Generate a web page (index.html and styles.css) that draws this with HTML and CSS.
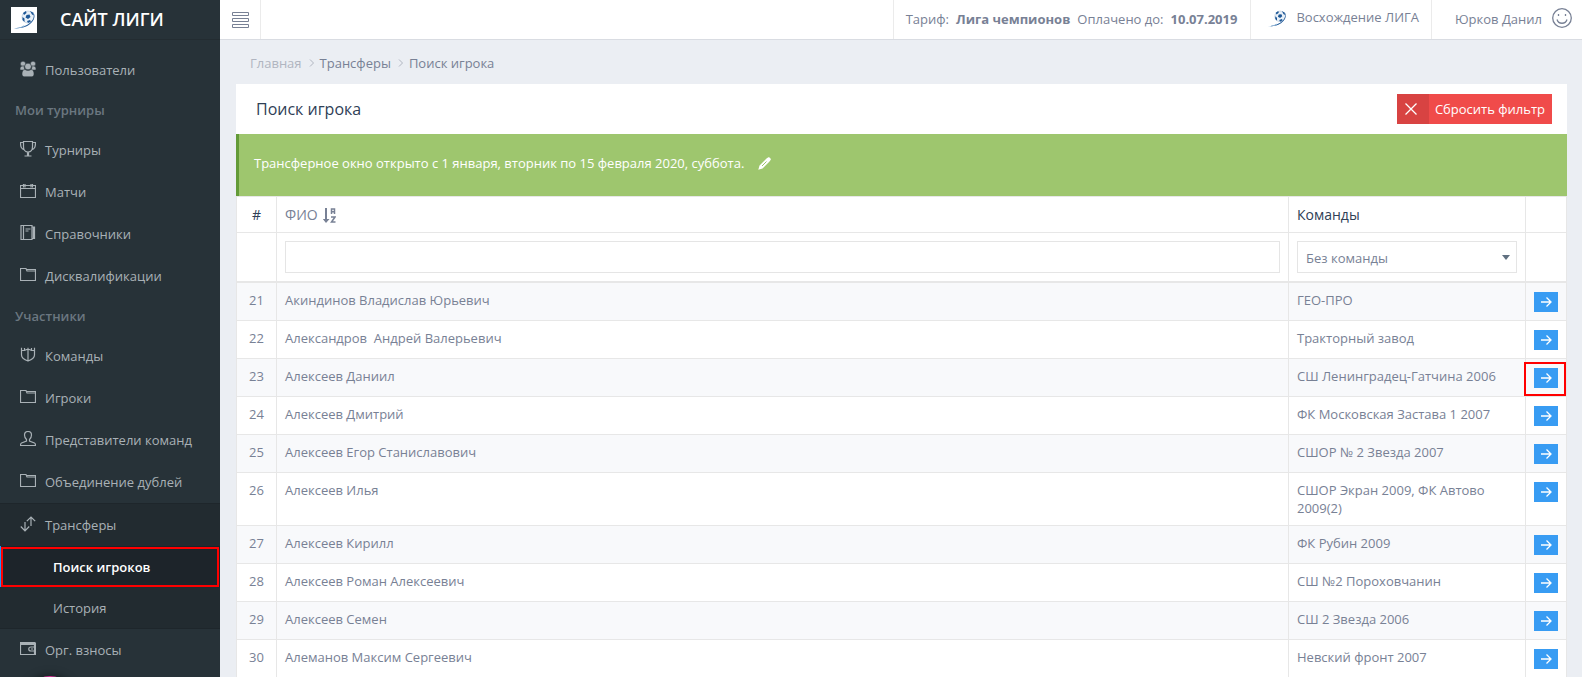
FILE: index.html
```html
<!DOCTYPE html>
<html lang="ru">
<head>
<meta charset="utf-8">
<title>Поиск игрока</title>
<link rel="stylesheet" href="styles.css">
</head>
<body>
<svg class="sprite" aria-hidden="true">
  <symbol id="folder" viewBox="0 0 16 16"><path d="M.5 1.500h5.500l1 2.500h8.500v9.500H.500zM6.500 2.500h9v2"/></symbol>
  <symbol id="arrow" viewBox="0 0 12 12"><path d="M1 6h9.500M6.500 1.500 11 6l-4.500 4.500"/></symbol>
  <symbol id="ball" viewBox="0 0 26 26">
    <circle cx="17" cy="10" r="6" fill="#e9f0f7" stroke="#a9bfd6" stroke-width=".6"/>
    <path fill="#1d5796" d="m15.500 8 3-.5 1 2.500-2.500 2-2.500-1.500zM12 6l3-2 .5 2-2.500 2zM19 4l3 1.500 1 3-2-1zM11.500 10l2 1.500v3.500l-2-2zM16 14l3-1 1 1.500-3 1.500z"/>
    <path fill="#1d5796" d="M21.500 4.500c4 5-1 12-8 14.500-4 1.500-7 2-10.500 2.500 4-.3 8-.5 12-2C21 17 26.500 9.500 21.500 4.500z"/>
    <path fill="#8ab2d6" d="M3 21.500c4-.5 7-1 9.500-3l1.500.5c-3 2-7 2.500-11 2.500z"/>
  </symbol>
</svg>
<div class="app">
  <aside class="sidebar">
    <div class="brand">
      <svg class="brand-logo"><use href="#ball"/></svg>
      <span class="brand-name">САЙТ ЛИГИ</span>
    </div>
    <nav class="menu">
      <a class="item" href="#"><svg class="icon solid" viewBox="0 0 16 16"><circle cx="3" cy="2.800" r="2.600"/><circle cx="13" cy="2.800" r="2.600"/><path d="M0 8c0-2 1-3 3-3h1c0 2 .5 3 1.500 4H1C.3 9 0 8.600 0 8zM16 8c0-2-1-3-3-3h-1c0 2-.5 3-1.500 4H15c.7 0 1-.4 1-1z"/><circle cx="8" cy="5.500" r="3.300"/><path d="M2 13c0-2.500 1-4.500 3-4.500 1.500 1.200 4.500 1.200 6 0 2 0 3 2 3 4.500 0 1.800-1 2.700-2.500 2.700h-7C3 15.700 2 14.800 2 13z"/></svg>Пользователи</a>
      <h2 class="caption">Мои турниры</h2>
      <a class="item" href="#"><svg class="icon" viewBox="0 0 16 16"><path d="M3.500.5h9v5c0 3-1.500 5.500-4.500 5.500S3.500 8.500 3.500 5.500zM3.500 1.500H.5c0 4 .5 6 4 7.500M12.500 1.500h3c0 4-.5 6-4 7.500M7.500 11v3.500M8.500 11v3.500M4.500 15h7"/></svg>Турниры</a>
      <a class="item" href="#"><svg class="icon" viewBox="0 0 16 16"><path d="M.5 2.500h15v12H.5zM.5 5.500h15M3.500 1v3.500M5 1v3.500M11 1v3.500M12.500 1v3.500M6 2.500h4"/></svg>Матчи</a>
      <a class="item" href="#"><svg class="icon" viewBox="0 0 16 16"><path d="M1 .5h11v14H1zM3.500.5v14M12.500 2h2v11.500h-2M5.500 4h5M5.500 6h3M13.500 2v11"/></svg>Справочники</a>
      <a class="item" href="#"><svg class="icon"><use href="#folder"/></svg>Дисквалификации</a>
      <h2 class="caption">Участники</h2>
      <a class="item" href="#"><svg class="icon" viewBox="0 0 16 16"><path d="M1.500.8v2.700h3L8 2l3.500 1.500h3V.8M1.500 3.500V8c0 3 2.500 4.500 6.500 6 4-1.500 6.500-3 6.500-6V3.500M8 .8V14M4.500 1v2.500M11.500 1v2.500"/></svg>Команды</a>
      <a class="item" href="#"><svg class="icon"><use href="#folder"/></svg>Игроки</a>
      <a class="item" href="#"><svg class="icon" viewBox="0 0 16 16"><path d="M8 .5c2.500 0 3.500 1.500 3.500 3.500 0 2.500-1 3.500-2 4.500v1.500l5 2c.7.300 1 1 1 2.500H.5c0-1.500.3-2.200 1-2.500l5-2V8.500c-1-1-2-2-2-4.500C4.500 2 5.500.5 8 .5z"/></svg>Представители команд</a>
      <a class="item" href="#"><svg class="icon"><use href="#folder"/></svg>Объединение дублей</a>
      <div class="group">
        <a class="item" href="#"><svg class="icon" viewBox="0 0 16 16"><path d="M5 6v9M.8 10.500 5 14.800l4.200-4.300M11 10V1M6.800 5.200 11 1l4.200 4.200"/></svg>Трансферы</a>
        <a class="sub current" href="#">Поиск игроков</a>
        <a class="sub" href="#">История</a>
      </div>
      <a class="item" href="#"><svg class="icon" viewBox="0 0 16 16"><path d="M.5 1.500h14v12H.5zM.5 3.500h14M1 2.500h13M15.500 1.500v12h-2M15 6h-4c-3 0-3 4 0 4h4M11 8h2"/></svg>Орг. взносы</a>
    </nav>
    <button class="bubble" aria-label="Чат"></button>
  </aside>

  <div class="page">
    <header class="topbar">
      <button class="toggle" aria-label="Меню"><svg viewBox="0 0 17 16"><path d="M.5.5h16v3H.5zM.5 6.500h16v3H.5zM.5 12.500h16v3H.5z"/></svg></button>
      <div class="cell plan"><span>Тариф:</span><b>Лига чемпионов</b><span>Оплачено до:</span><b>10.07.2019</b></div>
      <a class="cell league" href="#"><svg viewBox="1 2 25 22"><use href="#ball" width="26" height="26"/></svg><span>Восхождение ЛИГА</span></a>
      <a class="cell user" href="#"><span>Юрков Данил</span><svg viewBox="0 0 20 20"><circle cx="10" cy="10" r="9.300"/><path d="M6.500 6v2M13.500 6v2M5 11.500c1.500 5 8.500 5 10 0"/></svg></a>
    </header>

    <main class="content">
      <nav class="crumbs">
        <a class="home" href="#">Главная</a>
        <svg viewBox="0 0 6 8"><path d="m1 .5 3.500 3.500L1 7.500"/></svg>
        <a href="#">Трансферы</a>
        <svg viewBox="0 0 6 8"><path d="m1 .5 3.500 3.500L1 7.500"/></svg>
        <span>Поиск игрока</span>
      </nav>

      <section class="panel">
        <div class="panel-head">
          <h1>Поиск игрока</h1>
          <button class="reset"><span class="reset-icon"><svg viewBox="0 0 12 12"><path d="m.5.5 11 11M11.500.5l-11 11"/></svg></span><span class="reset-text">Сбросить фильтр</span></button>
        </div>
        <div class="notice">
          <span>Трансферное окно открыто с 1 января, вторник по 15 февраля 2020, суббота.</span>
          <button class="edit" aria-label="Изменить"><svg viewBox="0 0 13 13"><path fill="#fff" d="M8.500 1.500 10 .4c.5-.4 1-.3 1.500.1l1 1c.5.5.5 1 .1 1.500L11.500 4.500 4.500 11.500.3 12.800 1.500 8.500z"/><path stroke="#9fc66f" d="m4 9 4.500-4.500"/></svg></button>
        </div>
        <table class="players">
          <colgroup><col class="c-num"><col><col class="c-team"><col class="c-act"></colgroup>
          <thead>
            <tr class="titles">
              <th class="num">#</th>
              <th><a class="sort" href="#">ФИО <svg viewBox="0 0 13 15"><path fill="currentColor" d="M2 0h2v11h2.500L3 15-.2 11H2z"/><path fill="none" stroke="currentColor" stroke-width="1.500" d="M8.500 6V1h3v5M8.500 3.800h3M8 9h4l-3.500 5h4"/></svg></a></th>
              <th>Команды</th>
              <th></th>
            </tr>
            <tr class="filters">
              <td></td>
              <td><input type="text" aria-label="ФИО"></td>
              <td><div class="select"><select aria-label="Команды"><option>Без команды</option></select></div></td>
              <td></td>
            </tr>
          </thead>
          <tbody>
            <tr><td class="num">21</td><td>Акиндинов Владислав Юрьевич</td><td>ГЕО-ПРО</td><td><a class="go" href="#" aria-label="Открыть"><svg><use href="#arrow"/></svg></a></td></tr>
            <tr><td class="num">22</td><td>Александров&nbsp; Андрей Валерьевич</td><td>Тракторный завод</td><td><a class="go" href="#" aria-label="Открыть"><svg><use href="#arrow"/></svg></a></td></tr>
            <tr><td class="num">23</td><td>Алексеев Даниил</td><td>СШ Ленинградец-Гатчина 2006</td><td class="marked"><a class="go" href="#" aria-label="Открыть"><svg><use href="#arrow"/></svg></a></td></tr>
            <tr><td class="num">24</td><td>Алексеев Дмитрий</td><td>ФК Московская Застава 1 2007</td><td><a class="go" href="#" aria-label="Открыть"><svg><use href="#arrow"/></svg></a></td></tr>
            <tr><td class="num">25</td><td>Алексеев Егор Станиславович</td><td>СШОР № 2 Звезда 2007</td><td><a class="go" href="#" aria-label="Открыть"><svg><use href="#arrow"/></svg></a></td></tr>
            <tr><td class="num">26</td><td>Алексеев Илья</td><td>СШОР Экран 2009, ФК Автово 2009(2)</td><td><a class="go" href="#" aria-label="Открыть"><svg><use href="#arrow"/></svg></a></td></tr>
            <tr><td class="num">27</td><td>Алексеев Кирилл</td><td>ФК Рубин 2009</td><td><a class="go" href="#" aria-label="Открыть"><svg><use href="#arrow"/></svg></a></td></tr>
            <tr><td class="num">28</td><td>Алексеев Роман Алексеевич</td><td>СШ №2 Пороховчанин</td><td><a class="go" href="#" aria-label="Открыть"><svg><use href="#arrow"/></svg></a></td></tr>
            <tr><td class="num">29</td><td>Алексеев Семен</td><td>СШ 2 Звезда 2006</td><td><a class="go" href="#" aria-label="Открыть"><svg><use href="#arrow"/></svg></a></td></tr>
            <tr><td class="num">30</td><td>Алеманов Максим Сергеевич</td><td>Невский фронт 2007</td><td><a class="go" href="#" aria-label="Открыть"><svg><use href="#arrow"/></svg></a></td></tr>
          </tbody>
        </table>
      </section>
    </main>
  </div>
</div>
</body>
</html>
```
FILE: styles.css
```css
* { box-sizing: border-box; }
body {
  margin: 0;
  height: 100vh;
  overflow: hidden;
  background: #ebeef3;
  color: #788195;
  font: 13px/18px "Open Sans", "Noto Sans", sans-serif;
}
a { color: inherit; text-decoration: none; }
button, input, select { font: inherit; color: inherit; border-radius: 0; }
button { border: 0; padding: 0; background: none; }
h1, h2 { margin: 0; }
svg { display: block; flex: none; fill: none; }
.sprite { position: absolute; width: 0; height: 0; }
.app { display: flex; min-height: 100vh; }

/* Sidebar */
.sidebar { flex: none; width: 220px; background: #273238; color: #a9b1b6; }
.brand {
  display: flex;
  align-items: center;
  height: 40px;
  padding-left: 11px;
  gap: 23px;
  border-bottom: 1px solid #232c31;
}
.brand-logo { width: 26px; height: 26px; background: #fff; }
.brand-name { padding-bottom: 1px; color: #fff; font-size: 18px; font-weight: 600; }
.menu { padding-top: 9px; }
.item { display: flex; align-items: center; gap: 9px; height: 42px; padding-left: 20px; }
.icon { width: 16px; height: 16px; margin-bottom: 3px; stroke: #a9b1b6; stroke-width: 1.2; }
.solid { fill: #a9b1b6; stroke: #273238; stroke-width: .5; }
.caption {
  height: 38px;
  padding-left: 15px;
  color: #6b7780;
  font-size: 13px;
  font-weight: 600;
  line-height: 38px;
}
.group {
  background: #222b30;
  border: solid #1e262b;
  border-width: 1px 0;
}
.sub { display: flex; align-items: center; height: 41px; padding-left: 53px; }
.current {
  position: relative;
  background: #1d242a;
  border-left: 1px solid #2196f3;
  padding-left: 52px;
  color: #fff;
  font-weight: 600;
}
.current::after {
  content: "";
  position: absolute;
  inset: 1px 1px 0 0;
  border: 2px solid #f00;
}
.bubble {
  position: fixed;
  left: 24px;
  bottom: -51px;
  width: 52px;
  height: 52px;
  border-radius: 50%;
  background: #d13296;
  box-shadow: 0 0 10px rgba(0, 0, 0, .5);
}

/* Top bar */
.page { flex: 1; min-width: 0; }
.topbar { display: flex; height: 40px; background: #fff; border-bottom: 1px solid #d9dce2; }
.toggle { width: 41px; padding-left: 12px; margin-right: auto; border-right: 1px solid #ebebeb; }
.toggle svg { width: 17px; height: 16px; stroke: #788195; }
.cell { display: flex; align-items: center; border-left: 1px solid #ebebeb; }
.plan { gap: 7px; padding: 0 13px 1px 12px; }
.league { gap: 8px; padding: 0 12px 5px 15px; }
.league svg { width: 22px; height: 20px; margin-top: 3px; }
.user { gap: 10px; padding: 0 10px 1px 23px; }
.user svg { width: 20px; height: 20px; stroke: #788195; stroke-width: 1.3; margin-bottom: 2px; }

/* Content */
.content { padding: 0 15px 0 16px; }
.crumbs { display: flex; align-items: center; gap: 5px; height: 44px; padding: 2px 14px 0; }
.home { color: #b0b5c0; }
.crumbs svg { width: 6px; height: 8px; margin-left: 2px; stroke: #b0b5c0; }
.panel { background: #fff; }
.panel-head { display: flex; align-items: center; justify-content: space-between; height: 50px; padding: 0 15px 0 20px; }
.panel-head h1 { color: #2f4056; font-size: 16px; font-weight: 500; }
.reset { display: flex; height: 30px; background: #f04b4a; color: #fff; }
.reset-icon { display: flex; align-items: center; justify-content: center; width: 32px; height: 30px; padding-right: 3px; background: #d84342; }
.reset-icon svg { width: 12px; height: 12px; stroke: #fff; stroke-width: 1.3; }
.reset-text { padding: 0 7px 0 6px; line-height: 30px; }
.notice { display: flex; align-items: center; gap: 14px; height: 62px; padding: 0 15px 4px; background: #9ec66e; border-left: 3px solid #649b38; color: #fff; }
.edit svg { width: 13px; height: 13px; }

/* Table */
.players { width: 100%; table-layout: fixed; border-collapse: collapse; }
.c-num { width: 40px; }
.c-team { width: 237px; }
.c-act { width: 41px; }
.players th, .players td { padding: 8px; border: 1px solid #e7e7e7; text-align: left; vertical-align: top; }
.players th { height: 36px; padding-top: 9px; color: #2f4056; font-size: 14px; font-weight: 500; }
.players .num { text-align: center; }
.sort { display: flex; align-items: center; gap: 5px; color: #788195; }
.sort svg { width: 13px; height: 15px; }
.filters { border-bottom: 2px solid #e7e7e7; }
.filters input { display: block; width: 100%; height: 32px; border: 1px solid #e5e5e5; padding: 6px 8px; }
.select { position: relative; }
.select select { appearance: none; display: block; width: 100%; height: 32px; padding: 2px 8px 0; border: 1px solid #e5e5e5; background: #fff; }
.select::after { content: ""; position: absolute; right: 7px; top: 14px; border: solid transparent; border-width: 5px 4px 0; border-top-color: #607080; }
tbody tr:nth-child(odd) { background: #f8f9fb; }
.go { display: flex; align-items: center; justify-content: center; width: 24px; height: 20px; margin-top: 1px; background: #389cf3; }
.go svg { width: 12px; height: 12px; stroke: #fff; stroke-width: 1.3; }
.marked { position: relative; }
.marked::after { content: ""; position: absolute; inset: 3px 0 0 -2px; border: 2px solid #f00; }
```
